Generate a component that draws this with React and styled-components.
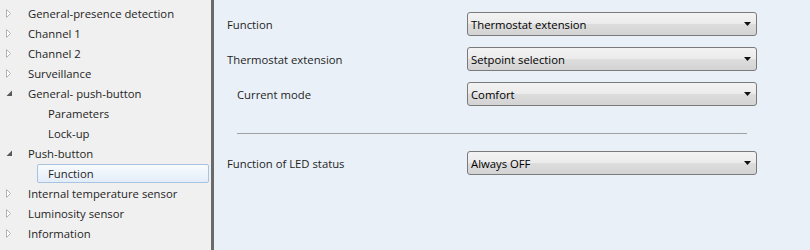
import styled, { createGlobalStyle } from "styled-components";

const GlobalStyle = createGlobalStyle`
  html, body {
    margin: 0;
    padding: 0;
    background: #e9f0f7;
  }
  body {
    font-family: "Open Sans", "Noto Sans", sans-serif;
    font-size: 11.3px;
    color: #1e1e1e;
  }
`;

const tree = [
  { label: "General-presence detection", level: 0, state: "closed" },
  { label: "Channel 1", level: 0, state: "closed" },
  { label: "Channel 2", level: 0, state: "closed" },
  { label: "Surveillance", level: 0, state: "closed" },
  { label: "General- push-button", level: 0, state: "open" },
  { label: "Parameters", level: 1 },
  { label: "Lock-up", level: 1 },
  { label: "Push-button", level: 0, state: "open" },
  { label: "Function", level: 1, selected: true },
  { label: "Internal temperature sensor", level: 0, state: "closed" },
  { label: "Luminosity sensor", level: 0, state: "closed" },
  { label: "Information", level: 0, state: "closed" },
];

const params = [
  { label: "Function", value: "Thermostat extension" },
  { label: "Thermostat extension", value: "Setpoint selection" },
  { label: "Current mode", value: "Comfort", indent: true },
];

const Expander = ({ state }) => {
  if (state === "open")
    return (
      <svg width="7" height="7" viewBox="0 0 7 7">
        <path d="M6 0.5 L6 6 L0.5 6 Z" fill="#595959" />
      </svg>
    );
  if (state === "closed")
    return (
      <svg width="6" height="9" viewBox="0 0 6 9">
        <path d="M0.5 0.5 L4.5 4.5 L0.5 8.5 Z" fill="#fff" stroke="#b4b4b4" strokeWidth="1" />
      </svg>
    );
  return null;
};

const Arrow = () => (
  <svg width="7" height="4" viewBox="0 0 7 4">
    <path d="M0 0 L7 0 L3.5 4 Z" fill="#111" />
  </svg>
);

const App = () => (
  <>
    <GlobalStyle />
    <Window>
      <Sidebar>
        {tree.map((item) => (
          <TreeRow key={item.label} $level={item.level}>
            <ExpanderSlot>
              <Expander state={item.state} />
            </ExpanderSlot>
            <TreeLabel $selected={item.selected}>{item.label}</TreeLabel>
          </TreeRow>
        ))}
      </Sidebar>
      <Splitter />
      <Content>
        <Group>
          {params.map((p) => (
            <ParamRow key={p.label}>
              <ParamLabel $indent={p.indent}>{p.label}</ParamLabel>
              <Combo>
                <span>{p.value}</span>
                <Arrow />
              </Combo>
            </ParamRow>
          ))}
        </Group>
        <Separator />
        <ParamRow>
          <ParamLabel>Function of LED status</ParamLabel>
          <Combo>
            <span>Always OFF</span>
            <Arrow />
          </Combo>
        </ParamRow>
      </Content>
    </Window>
  </>
);

const Window = styled.div`
  display: flex;
  width: 810px;
  height: 250px;
  overflow: hidden;
`;

const Sidebar = styled.div`
  width: 211px;
  flex-shrink: 0;
  background: #f0f0f0;
  padding-top: 3px;
  box-sizing: border-box;
`;

const TreeRow = styled.div`
  display: flex;
  align-items: center;
  height: 20px;
  padding-left: ${(p) => 1 + p.$level * 20}px;
`;

const ExpanderSlot = styled.div`
  width: 16px;
  display: flex;
  align-items: center;
  justify-content: center;
  flex-shrink: 0;
  margin-right: 6px;
`;

const TreeLabel = styled.div`
  flex: ${(p) => (p.$selected ? 1 : "none")};
  height: 19px;
  line-height: 17px;
  padding: 0 ${(p) => (p.$selected ? "10px" : "4px")};
  margin-left: ${(p) => (p.$selected ? "-6px" : "0")};
  margin-right: 2px;
  box-sizing: border-box;
  border: 1px solid ${(p) => (p.$selected ? "#a8c3e0" : "transparent")};
  border-radius: 2px;
  background: ${(p) =>
    p.$selected ? "linear-gradient(#f8fbfe, #e3edf8)" : "transparent"};
  white-space: nowrap;
`;

const Splitter = styled.div`
  width: 3px;
  flex-shrink: 0;
  background: #6a6a6a;
`;

const Content = styled.div`
  flex: 1;
  background: #e9f0f7;
  padding: 12px 0 0 13px;
  display: flex;
  flex-direction: column;
`;

const Group = styled.div`
  display: flex;
  flex-direction: column;
  gap: 11px;
`;

const ParamRow = styled.div`
  display: flex;
  align-items: center;
  height: 24px;
`;

const ParamLabel = styled.div`
  width: 240px;
  flex-shrink: 0;
  padding-left: ${(p) => (p.$indent ? "10px" : "0")};
  box-sizing: border-box;
`;

const Combo = styled.div`
  width: 290px;
  height: 24px;
  box-sizing: border-box;
  border: 1px solid #7a7a7a;
  border-radius: 3px;
  background: linear-gradient(#f3f3f3 0%, #ebebeb 50%, #dddddd 51%, #d3d3d3 100%);
  display: flex;
  align-items: center;
  justify-content: space-between;
  padding: 0 5px 0 3px;
  color: #000;
`;

const Separator = styled.div`
  width: 510px;
  height: 1px;
  background: #a0a0a0;
  margin: 27px 0 17px 10px;
`;

export default App;
